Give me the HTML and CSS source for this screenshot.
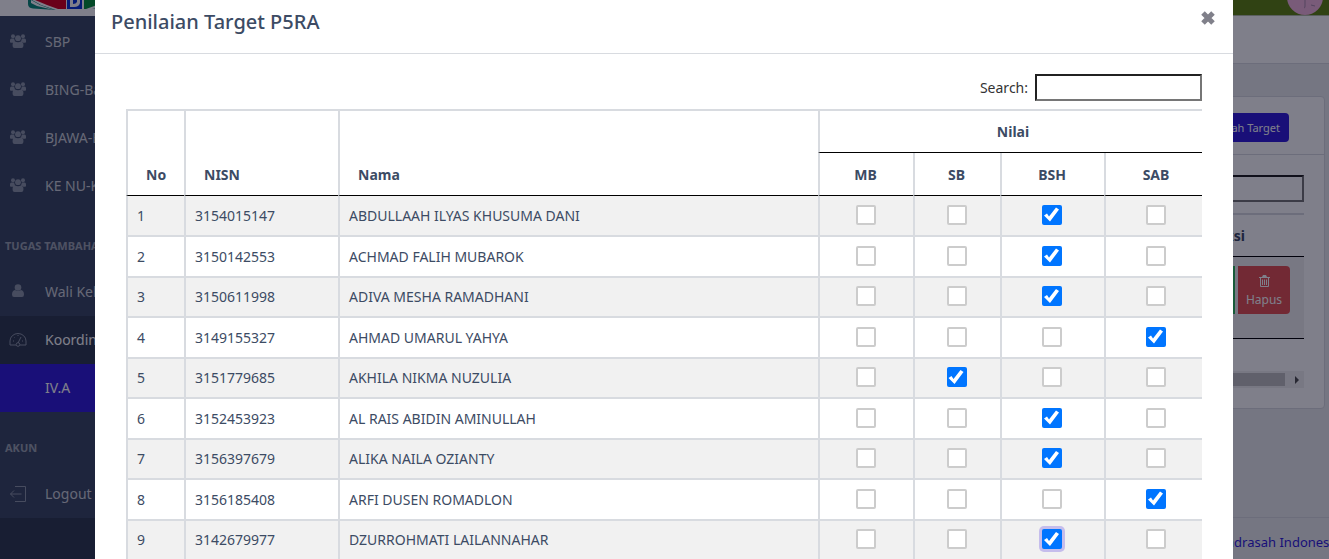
FILE: index.html
```html
<!DOCTYPE html>
<html lang="id">
<head>
<meta charset="utf-8">
<title>Penilaian Target P5RA</title>
<link rel="stylesheet" href="styles.css">
</head>
<body>
<svg class="defs" aria-hidden="true">
  <symbol id="users" viewBox="0 0 16 14">
    <circle cx="3" cy="2.2" r="2"/><circle cx="13" cy="2.2" r="2"/><circle cx="8" cy="4.2" r="2.9"/>
    <path d="M0 8V6.300Q0 4.500 1.500 4.500H4.200Q4.300 6.500 5.300 7.300Q3.800 7.500 3.400 8.800H1Q0 8.800 0 8ZM16 8V6.300Q16 4.500 14.500 4.500H11.800Q11.700 6.500 10.700 7.300Q12.200 7.500 12.600 8.800H15Q16 8.800 16 8ZM2.600 12V10.500Q2.800 7.500 5 7.500Q8 9 11 7.500Q13.200 7.500 13.400 10.500V12Q13.200 14 11.500 14H4.500Q2.700 14 2.600 12Z"/>
  </symbol>
</svg>
<div class="app">
  <nav class="sidebar">
    <div class="brand">
      <svg width="90" height="16" viewBox="0 0 90 16" aria-hidden="true">
        <path d="M0 0V4Q0 8 5 8.500L28 10L13 5L4 0Z" fill="#0d8a77"/>
        <path d="M3 0L12 5L26 10L9 6L3 3Z" fill="#fff"/>
        <path d="M7 0H38V9L30 9L19 5Z" fill="#d5001c"/>
        <path d="M39 0V9H54V0Z" fill="#0a36d6"/>
        <path d="M42 0H52V3Q51 7 46 7H42Z" fill="#fff"/>
        <path d="M45 0H49V2Q48 4 45 4Z" fill="#0a36d6"/>
        <path d="M56 0H80V2L69 5L58 9H56Z" fill="#07923b"/>
        <path d="M64 9L80 5V8Z" fill="#0d8a77"/>
      </svg>
    </div>
    <a class="item" href="#"><svg class="icon" width="16" height="14"><use href="#users"/></svg>SBP</a>
    <a class="item" href="#"><svg class="icon" width="16" height="14"><use href="#users"/></svg>BING-Bah</a>
    <a class="item" href="#"><svg class="icon" width="16" height="14"><use href="#users"/></svg>BJAWA-B</a>
    <a class="item" href="#"><svg class="icon" width="16" height="14"><use href="#users"/></svg>KE NU-Ke</a>
    <div class="section">TUGAS TAMBAHAN</div>
    <a class="item" href="#"><svg class="icon" width="16" height="14" viewBox="0 0 16 14"><circle cx="8" cy="3.500" r="3.300"/><path d="M2 10.500Q2 6.500 5 6Q8 8.200 11 6Q14 6.500 14 10.500Q14 13 12 13H4Q2 13 2 10.500Z"/></svg>Wali Kelas</a>
    <a class="item open" href="#"><svg class="icon line" width="18" height="16" viewBox="0 0 18 16"><path d="M1 13V9A8 7.500 0 0 1 17 9V13H11M1 13H7M9 11L12 5"/><circle cx="9" cy="12.500" r="1.800"/><path d="M4 9H5M5.500 5.500L6 6M9 3V4M13 9H14"/></svg>Koordinator</a>
    <a class="item current" href="#">IV.A</a>
    <div class="section">AKUN</div>
    <a class="item" href="#"><svg class="icon line" width="18" height="18" viewBox="0 0 18 18"><path d="M6 1.500H16.500V16.500H6M12.500 9H1.500M5 5.500L1.500 9L5 12.500"/></svg>Logout</a>
    <div class="minimizer"></div>
  </nav>
  <main class="main">
    <header class="topbar">
      <svg class="avatar" width="38" height="38" viewBox="0 0 38 38" aria-hidden="true"><circle cx="19" cy="20" r="18" fill="#f2b6dc"/><path d="M19 22V29Q19 31 18 31M25 28L29 29" stroke="#a98aa8" fill="none"/></svg>
    </header>
    <div class="crumbs"></div>
    <section class="card">
      <div class="card-head"><button class="btn primary" type="button">Tambah Target</button></div>
      <div class="card-body">
        <input class="search" type="search" aria-label="Cari target">
        <table class="targets">
          <thead><tr><th>Aksi</th></tr></thead>
          <tbody><tr><td><div class="actions">
            <button class="btn edit" type="button" aria-label="Edit"></button>
            <button class="btn danger" type="button"><svg width="11" height="12" viewBox="0 0 11 12"><path d="M0 2H3L4 0H7L8 2H11V3H0Z" fill="#fff"/><path d="M1.500 3V11.500H9.500V3M3.500 4.500V10M5.500 4.500V10M7.500 4.500V10" fill="none" stroke="#fff"/></svg>Hapus</button>
          </div></td></tr></tbody>
        </table>
        <div class="scrollbar"><span class="thumb"></span><span class="arrow"></span></div>
      </div>
    </section>
    <footer class="footer"><a href="#">Madrasah Indonesia</a></footer>
  </main>
</div>
<div class="backdrop">
  <div class="modal" role="dialog" aria-modal="true" aria-labelledby="title">
    <div class="modal-head">
      <h5 class="modal-title" id="title">Penilaian Target P5RA</h5>
      <button class="close" type="button" aria-label="Tutup"><svg width="16" height="16" viewBox="0 0 16 16"><path d="M3 3L13 13M13 3L3 13"/></svg></button>
    </div>
    <div class="modal-body">
      <div class="filter"><label for="q">Search:</label><input class="search" id="q" type="search"></div>
      <div class="scroller">
        <table class="grades">
          <colgroup><col class="c-no"><col class="c-nisn"><col><col class="c-mb"><col class="c-sb"><col class="c-bsh"><col class="c-sab"></colgroup>
          <thead>
            <tr><th rowspan="2">No</th><th rowspan="2">NISN</th><th rowspan="2">Nama</th><th class="mid" colspan="4">Nilai</th></tr>
            <tr><th class="mid">MB</th><th class="mid">SB</th><th class="mid">BSH</th><th class="mid">SAB</th></tr>
          </thead>
          <tbody>
            <tr><td>1</td><td>3154015147</td><td>ABDULLAAH ILYAS KHUSUMA DANI</td><td><input type="checkbox" aria-label="MB"></td><td><input type="checkbox" aria-label="SB"></td><td><input type="checkbox" aria-label="BSH" checked></td><td><input type="checkbox" aria-label="SAB"></td></tr>
            <tr><td>2</td><td>3150142553</td><td>ACHMAD FALIH MUBAROK</td><td><input type="checkbox" aria-label="MB"></td><td><input type="checkbox" aria-label="SB"></td><td><input type="checkbox" aria-label="BSH" checked></td><td><input type="checkbox" aria-label="SAB"></td></tr>
            <tr><td>3</td><td>3150611998</td><td>ADIVA MESHA RAMADHANI</td><td><input type="checkbox" aria-label="MB"></td><td><input type="checkbox" aria-label="SB"></td><td><input type="checkbox" aria-label="BSH" checked></td><td><input type="checkbox" aria-label="SAB"></td></tr>
            <tr><td>4</td><td>3149155327</td><td>AHMAD UMARUL YAHYA</td><td><input type="checkbox" aria-label="MB"></td><td><input type="checkbox" aria-label="SB"></td><td><input type="checkbox" aria-label="BSH"></td><td><input type="checkbox" aria-label="SAB" checked></td></tr>
            <tr><td>5</td><td>3151779685</td><td>AKHILA NIKMA NUZULIA</td><td><input type="checkbox" aria-label="MB"></td><td><input type="checkbox" aria-label="SB" checked></td><td><input type="checkbox" aria-label="BSH"></td><td><input type="checkbox" aria-label="SAB"></td></tr>
            <tr><td>6</td><td>3152453923</td><td>AL RAIS ABIDIN AMINULLAH</td><td><input type="checkbox" aria-label="MB"></td><td><input type="checkbox" aria-label="SB"></td><td><input type="checkbox" aria-label="BSH" checked></td><td><input type="checkbox" aria-label="SAB"></td></tr>
            <tr><td>7</td><td>3156397679</td><td>ALIKA NAILA OZIANTY</td><td><input type="checkbox" aria-label="MB"></td><td><input type="checkbox" aria-label="SB"></td><td><input type="checkbox" aria-label="BSH" checked></td><td><input type="checkbox" aria-label="SAB"></td></tr>
            <tr><td>8</td><td>3156185408</td><td>ARFI DUSEN ROMADLON</td><td><input type="checkbox" aria-label="MB"></td><td><input type="checkbox" aria-label="SB"></td><td><input type="checkbox" aria-label="BSH"></td><td><input type="checkbox" aria-label="SAB" checked></td></tr>
            <tr><td>9</td><td>3142679977</td><td>DZURROHMATI LAILANNAHAR</td><td><input type="checkbox" aria-label="MB"></td><td><input type="checkbox" aria-label="SB"></td><td><input class="focused" type="checkbox" aria-label="BSH" checked></td><td><input type="checkbox" aria-label="SAB"></td></tr>
          </tbody>
        </table>
      </div>
    </div>
  </div>
</div>
</body>
</html>
```
FILE: styles.css
```css
* { box-sizing: border-box; }
body {
  margin: 0;
  height: 100vh;
  overflow: hidden;
  background: #ebedef;
  color: #3c4b64;
  font: 14px/21px "Noto Sans", "Open Sans", sans-serif;
}
a { text-decoration: none; }
button, input { font: inherit; margin: 0; }
.defs { position: absolute; width: 0; height: 0; }
.app { display: flex; height: 100vh; }

.sidebar {
  display: flex;
  flex-direction: column;
  flex: none;
  width: 244px;
  background: #3c4b64;
}
.brand { height: 18px; padding-left: 28px; border-bottom: 2px solid #3c4b64; background: #fff; }
.brand svg { display: block; }
.item {
  display: flex;
  align-items: center;
  flex: none;
  height: 48px;
  padding: 0 0 1px 45px;
  color: rgba(255, 255, 255, .75);
  white-space: nowrap;
}
.icon { flex: none; width: 18px; margin: 0 18px 2px -36px; fill: #8f98a8; }
.line { margin-bottom: 0; fill: none; stroke: #8f98a8; }
.open { background: #303c50; color: #fff; }
.current { background: #321fdb; color: #fff; }
.section {
  flex: none;
  height: 58px;
  padding: 25px 0 0 5px;
  color: rgba(255, 255, 255, .5);
  font-size: 11px;
  font-weight: 700;
}
.minimizer { flex: 1; background: #303c50; }

.main { display: flex; flex-direction: column; flex: 1; min-width: 0; overflow: hidden; }
.topbar {
  display: flex;
  flex: none;
  justify-content: flex-end;
  align-items: flex-end;
  height: 16px;
  padding-right: 5px;
  border-bottom: 1px solid #b4bfa8;
  background: #608410;
}
.avatar { flex: none; }
.crumbs { flex: none; height: 48px; border-bottom: 1px solid #d8dbe0; background: #fff; }
.card {
  margin: 32px 4px 0 20px;
  border: 1px solid #d8dbe0;
  border-radius: 4px;
  background: #fff;
}
.card-head { display: flex; justify-content: flex-end; padding: 16px 35px 12px; border-bottom: 1px solid #d8dbe0; }
.card-body { display: flex; flex-direction: column; align-items: flex-end; padding: 20px 20px 20px; }
.btn { border: 0; border-radius: 4px; color: #fff; font-size: 12px; line-height: 18px; }
.primary { height: 29px; padding: 0 9px; background: #321fdb; font-size: 11px; }
.search {
  width: 167px;
  height: 27px;
  padding: 0 4px;
  border: 2px inset #767676;
  border-radius: 0;
  background: transparent;
}
.targets { width: 100%; margin-top: 11px; border-spacing: 0; }
.targets th { height: 44px; padding: 0 59px 0 0; border-top: 2px solid #d8dbe0; border-bottom: 1px solid #000; text-align: right; }
.targets td { height: 82px; padding: 9px 14px; border-bottom: 1px solid #000; background: #f1f1f1; vertical-align: top; }
.actions { display: flex; justify-content: flex-end; gap: 3px; }
.edit { width: 52px; height: 48px; border-radius: 4px 0 0 4px; background: #2eb85c; }
.danger {
  display: flex;
  flex-direction: column;
  align-items: center;
  justify-content: flex-end;
  gap: 4px;
  width: 52px;
  height: 48px;
  padding: 0 0 5px;
  border-radius: 0 4px 4px 0;
  background: #e55353;
}
.scrollbar {
  display: flex;
  align-items: center;
  justify-content: flex-end;
  gap: 10px;
  width: 100%;
  height: 17px;
  margin-top: 32px;
  padding-right: 5px;
  background: #f1f1f1;
}
.thumb { flex: 1; height: 13px; background: #c1c1c1; }
.arrow { border: 4px solid transparent; border-right: 0; border-left-color: #505050; }
.footer {
  display: flex;
  justify-content: flex-end;
  align-items: center;
  margin-top: auto;
  height: 42px;
  padding: 8px 0 0;
  border-top: 1px solid #d8dbe0;
}
.footer a { margin-right: -11px; color: #321fdb; font-size: 13px; white-space: nowrap; }

.backdrop {
  position: fixed;
  inset: 0;
  display: flex;
  justify-content: center;
  align-items: flex-start;
  padding: 0 96px 0 95px;
  overflow: hidden;
  background: rgba(0, 0, 21, .5);
}
.modal { flex: 1; max-width: 1138px; background: #fff; }
.modal-head {
  display: flex;
  justify-content: space-between;
  height: 54px;
  padding: 7px 17px 0 16px;
  border-bottom: 1px solid #d8dbe0;
}
.modal-title { margin: 0; font-size: 20px; font-weight: 500; line-height: 30px; }
.close { height: 22px; padding: 2px 0; border: 0; background: none; }
.close svg { display: block; fill: none; stroke: #80808a; stroke-width: 5; }
.modal-body { padding: 20px 31px; }
.filter { display: flex; justify-content: flex-end; align-items: center; gap: 7px; color: #333; }
.scroller { margin-top: 8px; overflow: hidden; }
.grades { width: calc(100% + 6px); table-layout: fixed; border-spacing: 0; border-top: 2px solid #d8dbe0; }
.c-no { width: 58px; }
.c-nisn { width: 154px; }
.c-mb { width: 95px; }
.c-sb { width: 87px; }
.c-bsh, .c-sab { width: 104px; }
.grades th {
  height: 43px;
  padding: 0 18px 10px;
  border-left: 2px solid #d8dbe0;
  border-bottom: 1px solid #000;
  text-align: left;
  vertical-align: bottom;
}
.grades .mid { padding: 0 2px 0 0; text-align: center; vertical-align: middle; }
.grades tr:first-child .mid { height: 42px; }
.grades td {
  height: 40px;
  padding: 0 9px 1px;
  border-left: 2px solid #d8dbe0;
  border-bottom: 2px solid #d8dbe0;
  white-space: nowrap;
}
.grades tr:nth-child(even) td, .grades tr:first-child td { height: 41px; }
.grades tbody tr:nth-child(odd) { background: #f1f1f1; }
.grades td:nth-child(n+4) { padding: 0 2px 2px 0; text-align: center; }
.grades input {
  display: block;
  appearance: none;
  width: 20px;
  height: 20px;
  margin: 0 auto;
  border: 2px solid #ccc;
  border-radius: 2px;
  background: #fff;
}
.grades input:checked { border: 0; background: #0075ff; }
.grades input:checked::before {
  content: "";
  display: block;
  height: 20px;
  background: #fff;
  clip-path: polygon(2px 11px, 5px 9px, 7px 12px, 14px 3px, 17px 5px, 8px 17px);
}
.grades .focused { box-shadow: 0 0 0 3px #c5bdec; }
```
